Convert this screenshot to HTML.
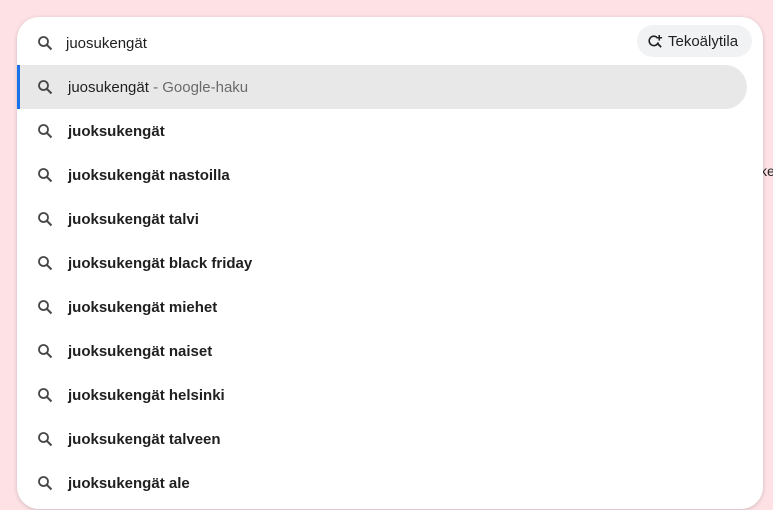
<!DOCTYPE html>
<html><head><style>
html,body{margin:0;padding:0;width:773px;height:510px;overflow:hidden;background:#fde1e5;font-family:"Liberation Sans",sans-serif;}
.ke{position:absolute;left:760px;top:163px;font-size:14px;color:#222;}
.card{position:absolute;left:17px;top:17px;width:746px;height:492px;background:#fff;border-radius:22px;box-shadow:0 1px 4px rgba(0,0,0,.18);overflow:hidden;}
.row{position:absolute;left:0;height:44px;width:730px;display:flex;align-items:center;}
.row svg{position:absolute;left:20px;top:14px;}
.row span{position:absolute;left:51px;font-size:15px;color:#1f1f1f;font-weight:bold;}
.hl{background:#e8e8e8;border-radius:0 22px 22px 0;}
.hl:before{content:"";position:absolute;left:0;top:0;width:3px;height:44px;background:#1a73e8;}
.btn{position:absolute;left:620px;top:8px;width:115px;height:32px;background:#f1f2f4;border-radius:16px;font-size:15px;color:#1f1f1f;}
</style></head><body>
<div class="ke">ke</div>
<div class="card">
<div class="row" style="top:4px"><svg width="16" height="16" viewBox="0 0 16 16"><circle cx="6.5" cy="6.5" r="4.5" fill="none" stroke="#474747" stroke-width="1.8"/><path d="M10 10l4.5 4.5" stroke="#474747" stroke-width="2"/></svg><span style="left:49px;font-weight:normal">juosukengät</span></div>
<div class="btn"><svg style="position:absolute;left:11px;top:9px" width="15" height="15" viewBox="0 0 16 16"><path d="M9.5 3.5A5 5 0 1 0 11 9" fill="none" stroke="#222" stroke-width="1.7"/><path d="M10 10l4 4" stroke="#222" stroke-width="1.9"/><path d="M12 1v6M9 4h6" stroke="#222" stroke-width="1.6"/></svg><span style="position:absolute;left:31px;top:8px">Tekoälytila</span></div>
<div class="row hl" style="top:48px"><svg width="16" height="16" viewBox="0 0 16 16"><circle cx="6.5" cy="6.5" r="4.5" fill="none" stroke="#474747" stroke-width="1.8"/><path d="M10 10l4.5 4.5" stroke="#474747" stroke-width="2"/></svg><span style="font-weight:normal">juosukengät <span style="position:static;color:#6b6b6b;font-weight:normal">- Google-haku</span></span></div>
<div class="row" style="top:92px"><svg width="16" height="16" viewBox="0 0 16 16"><circle cx="6.5" cy="6.5" r="4.5" fill="none" stroke="#474747" stroke-width="1.8"/><path d="M10 10l4.5 4.5" stroke="#474747" stroke-width="2"/></svg><span>juoksukengät</span></div>
<div class="row" style="top:136px"><svg width="16" height="16" viewBox="0 0 16 16"><circle cx="6.5" cy="6.5" r="4.5" fill="none" stroke="#474747" stroke-width="1.8"/><path d="M10 10l4.5 4.5" stroke="#474747" stroke-width="2"/></svg><span>juoksukengät nastoilla</span></div>
<div class="row" style="top:180px"><svg width="16" height="16" viewBox="0 0 16 16"><circle cx="6.5" cy="6.5" r="4.5" fill="none" stroke="#474747" stroke-width="1.8"/><path d="M10 10l4.5 4.5" stroke="#474747" stroke-width="2"/></svg><span>juoksukengät talvi</span></div>
<div class="row" style="top:224px"><svg width="16" height="16" viewBox="0 0 16 16"><circle cx="6.5" cy="6.5" r="4.5" fill="none" stroke="#474747" stroke-width="1.8"/><path d="M10 10l4.5 4.5" stroke="#474747" stroke-width="2"/></svg><span>juoksukengät black friday</span></div>
<div class="row" style="top:268px"><svg width="16" height="16" viewBox="0 0 16 16"><circle cx="6.5" cy="6.5" r="4.5" fill="none" stroke="#474747" stroke-width="1.8"/><path d="M10 10l4.5 4.5" stroke="#474747" stroke-width="2"/></svg><span>juoksukengät miehet</span></div>
<div class="row" style="top:312px"><svg width="16" height="16" viewBox="0 0 16 16"><circle cx="6.5" cy="6.5" r="4.5" fill="none" stroke="#474747" stroke-width="1.8"/><path d="M10 10l4.5 4.5" stroke="#474747" stroke-width="2"/></svg><span>juoksukengät naiset</span></div>
<div class="row" style="top:356px"><svg width="16" height="16" viewBox="0 0 16 16"><circle cx="6.5" cy="6.5" r="4.5" fill="none" stroke="#474747" stroke-width="1.8"/><path d="M10 10l4.5 4.5" stroke="#474747" stroke-width="2"/></svg><span>juoksukengät helsinki</span></div>
<div class="row" style="top:400px"><svg width="16" height="16" viewBox="0 0 16 16"><circle cx="6.5" cy="6.5" r="4.5" fill="none" stroke="#474747" stroke-width="1.8"/><path d="M10 10l4.5 4.5" stroke="#474747" stroke-width="2"/></svg><span>juoksukengät talveen</span></div>
<div class="row" style="top:444px"><svg width="16" height="16" viewBox="0 0 16 16"><circle cx="6.5" cy="6.5" r="4.5" fill="none" stroke="#474747" stroke-width="1.8"/><path d="M10 10l4.5 4.5" stroke="#474747" stroke-width="2"/></svg><span>juoksukengät ale</span></div>
</div>
</body></html>
